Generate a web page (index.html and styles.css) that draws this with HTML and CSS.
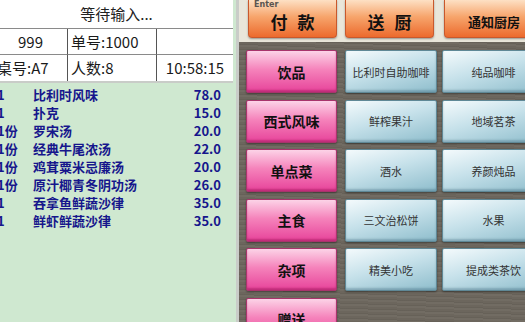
FILE: index.html
```html
<!DOCTYPE html>
<html lang="zh-CN">
<head>
  <meta charset="UTF-8">
  <title>点菜</title>
  <link rel="stylesheet" href="styles.css">
</head>
<body>
  <div class="order-panel">
    <div class="order-head">
      <div class="head-title">等待输入...</div>
      <div class="head-grid">
        <div class="cell center">999</div>
        <div class="cell">单号:1000</div>
        <div class="cell"></div>
        <div class="cell">桌号:A7</div>
        <div class="cell">人数:8</div>
        <div class="cell center">10:58:15</div>
      </div>
    </div>
    <div class="order-list">
      <div class="item"><span class="qty">1</span><span class="name">比利时风味</span><span class="price">78.0</span></div>
      <div class="item"><span class="qty">1</span><span class="name">扑克</span><span class="price">15.0</span></div>
      <div class="item"><span class="qty">1份</span><span class="name">罗宋汤</span><span class="price">20.0</span></div>
      <div class="item"><span class="qty">1份</span><span class="name">经典牛尾浓汤</span><span class="price">22.0</span></div>
      <div class="item"><span class="qty">1份</span><span class="name">鸡茸粟米忌廉汤</span><span class="price">20.0</span></div>
      <div class="item"><span class="qty">1份</span><span class="name">原汁椰青冬阴功汤</span><span class="price">26.0</span></div>
      <div class="item"><span class="qty">1</span><span class="name">吞拿鱼鲜蔬沙律</span><span class="price">35.0</span></div>
      <div class="item"><span class="qty">1</span><span class="name">鲜虾鲜蔬沙律</span><span class="price">35.0</span></div>
    </div>
  </div>

  <div class="menu-panel">
    <div class="action-bar">
      <button class="action-btn wide"><span class="hint">Enter</span>付 款</button>
      <button class="action-btn wide">送 厨</button>
      <button class="action-btn small">通知厨房</button>
    </div>
    <div class="menu-grid">
      <button class="cat-btn">饮品</button>
      <button class="dish-btn">比利时自助咖啡</button>
      <button class="dish-btn">纯品咖啡</button>

      <button class="cat-btn">西式风味</button>
      <button class="dish-btn">鲜榨果汁</button>
      <button class="dish-btn">地域茗茶</button>

      <button class="cat-btn">单点菜</button>
      <button class="dish-btn">酒水</button>
      <button class="dish-btn">养颜炖品</button>

      <button class="cat-btn">主食</button>
      <button class="dish-btn">三文治松饼</button>
      <button class="dish-btn">水果</button>

      <button class="cat-btn">杂项</button>
      <button class="dish-btn">精美小吃</button>
      <button class="dish-btn">提成类茶饮</button>

      <button class="cat-btn">赠送</button>
    </div>
  </div>
</body>
</html>
```

FILE: styles.css
```css
body {
  margin: 0;
  width: 525px;
  height: 322px;
  overflow: hidden;
  display: flex;
  font-family: "Noto Sans CJK SC", "Noto Sans", sans-serif;
  background-color: #6c665d;
}
.order-panel {
  width: 236px;
  flex-shrink: 0;
  display: flex;
  flex-direction: column;
  border-right: 3px solid #c9ccc8;
  background-color: #cfe8d0;
}
.order-head {
  background: white;
  border-bottom: 2px solid #c9ccc8;
  margin-right: 3px;
}
.head-title {
  height: 28px;
  line-height: 28px;
  text-align: center;
  font-size: 15px;
  color: #222;
  border-bottom: 1px solid #8a8a8a;
}
.head-grid {
  display: grid;
  grid-template-columns: 74px 89px 1fr;
  grid-auto-rows: 26px;
  margin-left: -6px;
}
.cell {
  line-height: 26px;
  font-size: 15px;
  color: #1a1a1a;
  padding-left: 3px;
  border-right: 1px solid #555;
  border-bottom: 1px solid #8a8a8a;
}
.cell:nth-child(3n) {
  border-right: none;
}
.cell:nth-child(n+4) {
  border-bottom: none;
}
.cell.center {
  text-align: center;
  padding-left: 0;
}
.order-list {
  padding-top: 3px;
  color: #16168c;
  font-weight: bold;
  font-size: 13px;
}
.item {
  display: flex;
  height: 18px;
  line-height: 18px;
}
.qty {
  width: 36px;
  margin-left: -3px;
}
.name {
  flex: 1;
}
.price {
  width: 40px;
  margin-right: 15px;
  text-align: right;
}
.menu-panel {
  flex: 1;
  overflow: hidden;
  background-color: #6c665d;
  background-image: repeating-linear-gradient(2deg, rgba(255,255,255,0.04) 0 2px, rgba(0,0,0,0.05) 2px 3px, transparent 3px 5px);
}
.action-bar {
  height: 42px;
  display: flex;
  gap: 8px;
  padding-left: 9px;
  background: #e9e6da;
  box-sizing: border-box;
}
button {
  font-family: "Noto Sans CJK SC", sans-serif;
  cursor: pointer;
  padding: 0;
}
.action-btn {
  position: relative;
  width: 89px;
  height: 38px;
  flex-shrink: 0;
  border: 1px solid #c9582c;
  border-top: none;
  border-radius: 0 0 4px 4px;
  background: linear-gradient(to bottom, #fde0c4 0%, #f7a56c 45%, #ec6a2d 100%);
  box-shadow: 0 1px 2px rgba(0,0,0,0.35);
  font-weight: bold;
  color: #111;
  padding-top: 6px;
}
.action-btn.wide {
  font-size: 17px;
  letter-spacing: 3px;
  text-indent: 3px;
}
.action-btn:nth-child(2) {
  margin-right: 2px;
}
.action-btn.small {
  width: 100px;
  font-size: 13px;
}
.hint {
  position: absolute;
  left: 5px;
  top: 0;
  font-family: "DejaVu Sans", sans-serif;
  font-size: 8px;
  font-weight: bold;
  letter-spacing: 0;
  text-indent: 0;
  color: #5a5550;
  line-height: 10px;
}
.menu-grid {
  display: grid;
  grid-template-columns: 91px 92px 100px;
  grid-auto-rows: 43px;
  column-gap: 8px;
  row-gap: 6.6px;
  padding: 8px 0 0 7px;
}
.menu-grid .dish-btn:nth-child(3n) {
  margin-left: -3px;
}
.cat-btn {
  border: 1px solid #a8346c;
  border-radius: 2px;
  background: linear-gradient(to bottom, #fcd3e7 0%, #f583bb 45%, #e7439a 100%);
  box-shadow: inset 0 -2px 2px rgba(120,0,60,0.35), 0 1px 2px rgba(0,0,0,0.4);
  font-size: 14px;
  font-weight: bold;
  color: #111;
}
.dish-btn {
  border: 1px solid #5f8896;
  border-radius: 2px;
  background: linear-gradient(165deg, #f4fafc 0%, #c6e1ea 45%, #8ebdcc 100%);
  box-shadow: inset 0 -2px 2px rgba(40,80,100,0.3), 0 1px 2px rgba(0,0,0,0.4);
  font-size: 11px;
  color: #333;
}
```
